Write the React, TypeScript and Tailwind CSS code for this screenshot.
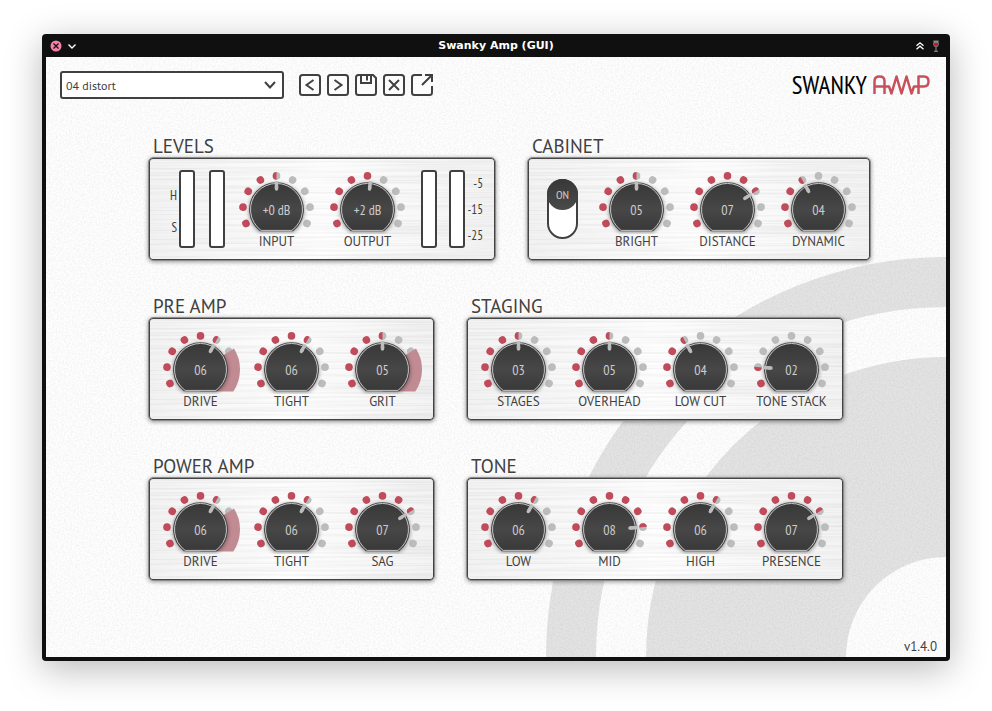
import { useId, useState, type ReactNode } from 'react';

const SANS = "font-['PT_Sans','Noto_Sans',sans-serif]";
const NARROW = "font-['PT_Sans_Narrow','Roboto_Condensed',sans-serif]";

const DOT_STEP = 0.5;
const DOT_RADIUS = 33.6;

function Grain() {
  return (
    <svg className="pointer-events-none absolute inset-0 size-full" aria-hidden="true">
      <filter id="grain" x="0" y="0" width="100%" height="100%">
        <feTurbulence type="fractalNoise" baseFrequency="0.6" numOctaves="3" seed="4" />
        <feColorMatrix values="0 0 0 0 0  0 0 0 0 0  0 0 0 0 0  0.1 0 0 0 -0.036" />
      </filter>
      <rect width="100%" height="100%" filter="url(#grain)" />
    </svg>
  );
}

function Rings() {
  return (
    <svg
      className="pointer-events-none absolute bottom-0 right-0 size-[400px]"
      viewBox="0 0 400 400"
      aria-hidden="true"
    >
      <circle cx="400" cy="400" r="375" fill="none" stroke="#e3e3e3" strokeWidth="50" />
      <circle cx="400" cy="400" r="200" fill="none" stroke="#e3e3e3" strokeWidth="200" />
    </svg>
  );
}

function Brushed() {
  return (
    <svg className="pointer-events-none absolute inset-px" width="100%" height="100%" aria-hidden="true">
      <filter id="brushed" x="0" y="0" width="100%" height="100%">
        <feTurbulence type="fractalNoise" baseFrequency="0.006 0.45" numOctaves="3" seed="11" />
        <feColorMatrix values="0 0 0 0 0  0 0 0 0 0  0 0 0 0 0  0.12 0 0 0 -0.045" />
      </filter>
      <rect width="100%" height="100%" filter="url(#brushed)" />
    </svg>
  );
}

type KnobProps = {
  label: string;
  display: string;
  /** Pointer position in dot steps, from -4 to 4. */
  position: number;
  warn?: boolean;
};

function Knob({ label, display, position, warn }: KnobProps) {
  const id = useId();
  const degrees = (position * DOT_STEP * 180) / Math.PI;
  return (
    <div className="flex w-[91px] flex-col items-center">
      <div className="relative h-[74px] w-full">
        <svg className="absolute inset-0 size-full" viewBox="-45.5 -49.5 91 74" aria-hidden="true">
          {[-4, -3, -2, -1, 0, 1, 2, 3, 4].map((i) => {
            const a = i * DOT_STEP;
            const cx = DOT_RADIUS * Math.sin(a);
            const cy = -DOT_RADIUS * Math.cos(a);
            return (
              <g key={i} transform={`translate(${cx} ${cy}) rotate(${(a * 180) / Math.PI})`}>
                <circle r="3.8" fill={i < position ? '#c04b5b' : '#bcbcbc'} />
                {i === position && <path d="M0 -3.8A3.8 3.8 0 0 0 0 3.8Z" fill="#c04b5b" />}
              </g>
            );
          })}
          {warn && <path d="M0 0L33.5 -20.9A39.5 39.5 0 0 1 32.8 22H0Z" fill="#c18b93" />}
          <path
            className="drop-shadow-[0_1px_2px_rgba(0,0,0,0.45)]"
            d="M-16.7 21.8A27.4 27.4 0 1 1 16.7 21.8Z"
            fill="#444444"
          />
          <path
            d="M-15.4 20.9A26 26 0 1 1 15.4 20.9Z"
            fill="url(#knob-face)"
            stroke="#c4c4c4"
            strokeWidth="1"
          />
          <g transform={`rotate(${degrees})`}>
            <path d="M0 -28.5V-21" stroke="#bdbdbd" strokeWidth="3.4" />
            <path d="M0 -23V-20.5" stroke="#bdbdbd" strokeWidth="3.4" strokeLinecap="round" />
          </g>
        </svg>
        <span
          className={`absolute inset-x-0 top-[41px] text-center text-[14px] leading-[18px] text-[#cccccc] ${NARROW}`}
        >
          {display}
        </span>
        <input
          id={id}
          type="range"
          min={-4}
          max={4}
          step={0.1}
          defaultValue={position}
          className="absolute inset-0 size-full cursor-pointer opacity-0"
        />
      </div>
      <label htmlFor={id} className="whitespace-nowrap text-[13px] leading-4">
        {label}
      </label>
    </div>
  );
}

function Meter({ label }: { label: string }) {
  return (
    <div
      role="meter"
      aria-label={label}
      aria-valuenow={0}
      className="h-[78px] w-4 rounded-[3px] border-2 border-[#404040] bg-white"
    />
  );
}

function Toggle() {
  const [on, setOn] = useState(true);
  return (
    <label className="relative flex h-[60px] w-[31px] cursor-pointer flex-col rounded-full border-2 border-[#404040] bg-white">
      <input
        type="checkbox"
        role="switch"
        aria-label="Cabinet"
        checked={on}
        onChange={(e) => setOn(e.target.checked)}
        className="absolute inset-0 size-full opacity-0"
      />
      <span
        className={`-mx-0.5 -my-0.5 flex h-[31px] items-center justify-center rounded-full bg-linear-to-b from-[#383838] to-[#4a4a4a] text-[12px] leading-4 text-[#cccccc] ${NARROW} ${on ? '' : 'mt-auto'}`}
      >
        {on ? 'ON' : 'OFF'}
      </span>
    </label>
  );
}

function Section({ title, children }: { title: string; children: ReactNode }) {
  return (
    <section>
      <h2 className="pb-0.5 pl-[5px] text-[19px] leading-[18px]">{title}</h2>
      <div className="relative flex h-[104px] overflow-clip rounded-[5px] border border-[#8c8c8c] bg-linear-to-r from-[#f3f3f3] via-[#fefefe] to-[#f3f3f3] px-1.5 pt-0.5 shadow-[inset_0_0_0_1px_#444444,0_1px_4px_rgba(0,0,0,0.4)]">
        <Brushed />
        <div className="relative flex">{children}</div>
      </div>
    </section>
  );
}

function ToolButton({ label, children }: { label: string; children: ReactNode }) {
  return (
    <button type="button" aria-label={label} className="size-[22px]">
      <svg viewBox="0 0 22 22" className="size-full" fill="none" stroke="#404040" strokeWidth="2">
        {children}
      </svg>
    </button>
  );
}

function Frame() {
  return <rect x="1" y="1" width="20" height="20" rx="2.5" fill="#fcfcfc" />;
}

export default function App() {
  return (
    <div className="flow-root min-h-screen bg-white">
      <svg width="0" height="0" className="absolute" aria-hidden="true">
        <linearGradient id="knob-face" x1="0" y1="0" x2="0" y2="1">
          <stop offset="0" stopColor="#383838" />
          <stop offset="0.55" stopColor="#474747" />
          <stop offset="1" stopColor="#393939" />
        </linearGradient>
      </svg>
      <div className="mx-[42px] mt-[34px] rounded-[4px] bg-[#101010] px-1 pb-1 shadow-[0_8px_36px_rgba(0,0,0,0.28)]">
        <header className="grid h-[23px] grid-cols-[1fr_auto_1fr] items-center px-1">
          <div className="flex items-center gap-1">
            <button type="button" aria-label="Close" className="size-3">
              <svg viewBox="0 0 12 12" className="size-full">
                <circle cx="6" cy="6" r="5.5" fill="#f77fa8" />
                <path d="M3.5 3.5L8.5 8.5M8.5 3.5L3.5 8.5" stroke="#101010" strokeWidth="1.3" />
              </svg>
            </button>
            <button type="button" aria-label="Window menu" className="size-3">
              <svg viewBox="0 0 12 12" className="size-full">
                <path d="M2.5 4.5L6 8L9.5 4.5" fill="none" stroke="#ffffff" strokeWidth="1.4" />
              </svg>
            </button>
          </div>
          <h1 className="font-['DejaVu_Sans',sans-serif] text-[11px] font-bold leading-4 text-white">
            Swanky Amp (GUI)
          </h1>
          <div className="flex items-center justify-end gap-1">
            <button type="button" aria-label="Keep above" className="size-3">
              <svg viewBox="0 0 12 12" className="size-full">
                <path
                  d="M2.5 5.8L6 2.8L9.5 5.8M2.5 9.2L6 6.2L9.5 9.2"
                  fill="none"
                  stroke="#ffffff"
                  strokeWidth="1.3"
                />
              </svg>
            </button>
            <svg viewBox="0 0 12 12" className="size-3" aria-hidden="true">
              <path d="M3.5 0.5H8.5L8.8 4.5Q8.6 7 6 7Q3.4 7 3.2 4.5Z" fill="#8d8282" />
              <path d="M4 3H8L8.1 4.6Q7.8 6.2 6 6.2Q4.2 6.2 3.9 4.6Z" fill="#b3202a" />
              <path d="M6 7V11M4 11.3H8" stroke="#9a9090" strokeWidth="1" />
            </svg>
          </div>
        </header>

        <main className={`relative bg-[#fefefe] text-[#404040] ${SANS}`}>
          <Rings />
          <Grain />
          <div className="relative px-3.5 pt-3.5">
            <div className="flex h-7 items-center">
              <div className="relative w-[224px]">
                <select
                  aria-label="Preset"
                  defaultValue="04 distort"
                  className="block h-7 w-full appearance-none rounded-[3px] border-2 border-[#404040] bg-white pl-1 pt-px text-[12px] leading-4"
                >
                  <option>04 distort</option>
                </select>
                <svg
                  viewBox="0 0 12 8"
                  className="pointer-events-none absolute right-2 top-2.5 h-2 w-3"
                  aria-hidden="true"
                >
                  <path d="M1 1L6 6.5L11 1" fill="none" stroke="#404040" strokeWidth="2" />
                </svg>
              </div>
              <div className="ml-[15px] flex gap-1.5">
                <ToolButton label="Previous preset">
                  <Frame />
                  <path d="M14.5 6L7.5 11L14.5 16" />
                </ToolButton>
                <ToolButton label="Next preset">
                  <Frame />
                  <path d="M7.5 6L14.5 11L7.5 16" />
                </ToolButton>
                <ToolButton label="Save preset">
                  <path
                    d="M3.5 1H18L21 4V18.5Q21 21 18.5 21H3.5Q1 21 1 18.5V3.5Q1 1 3.5 1Z"
                    fill="#fcfcfc"
                  />
                  <path d="M6 1V9H16V1M12 1.5V6.5" />
                </ToolButton>
                <ToolButton label="Delete preset">
                  <Frame />
                  <path d="M6 6L16 16M16 6L6 16" />
                </ToolButton>
                <ToolButton label="Open preset folder">
                  <path
                    d="M11 1H3.5Q1 1 1 3.5V18.5Q1 21 3.5 21H18.5Q21 21 21 18.5V11"
                    fill="#fcfcfc"
                    stroke="none"
                  />
                  <path d="M11 1H3.5Q1 1 1 3.5V18.5Q1 21 3.5 21H18.5Q21 21 21 18.5V12" />
                  <path d="M11 11L20.5 1.5M14 1H21V8" />
                </ToolButton>
              </div>
              <div className="ml-auto flex items-center gap-1.5 pr-0.5">
                <span className={`text-[25px] leading-7 text-black ${NARROW}`}>SWANKY</span>
                <svg viewBox="0 0 57 20" className="h-5 w-[57px]" role="img" aria-label="Amp">
                  <path
                    d="M1.5 19V6Q1.5 1.5 6.5 1.5Q11.5 1.5 11.5 6V19M1.5 11.5H16L18.5 18.5L23.5 1.5L28.5 18.5L33.5 1.5L38.5 18.5L41 11.5H51Q55.5 11.5 55.5 6.5Q55.5 1.5 51 1.5H45.5V19"
                    fill="none"
                    stroke="#c8505a"
                    strokeWidth="2.5"
                    strokeLinejoin="round"
                  />
                </svg>
              </div>
            </div>

            <div className="flex flex-col gap-9 pl-[88px] pt-[38px]">
              <div className="flex gap-[31px]">
                <Section title="LEVELS">
                  <div className="flex w-[76px] items-start pt-2.5">
                    <div
                      className={`flex w-[22px] flex-col gap-4 pt-[18px] text-right text-[13px] leading-4 ${NARROW}`}
                    >
                      <span>H</span>
                      <span>S</span>
                    </div>
                    <div className="ml-0.5 flex gap-3.5">
                      <Meter label="Input left" />
                      <Meter label="Input right" />
                    </div>
                  </div>
                  <Knob label="INPUT" display="+0 dB" position={0} />
                  <Knob label="OUTPUT" display="+2 dB" position={0.2} />
                  <div className="flex w-[76px] items-start pl-2 pt-2.5">
                    <div className="flex gap-3">
                      <Meter label="Output left" />
                      <Meter label="Output right" />
                    </div>
                    <div
                      className={`flex w-[18px] flex-col gap-2.5 pt-1.5 text-right text-[13px] leading-4 ${NARROW}`}
                    >
                      <span>-5</span>
                      <span>-15</span>
                      <span>-25</span>
                    </div>
                  </div>
                </Section>
                <Section title="CABINET">
                  <div className="flex w-[57px] justify-center pt-[19px]">
                    <Toggle />
                  </div>
                  <Knob label="BRIGHT" display="05" position={0} />
                  <Knob label="DISTANCE" display="07" position={2} />
                  <Knob label="DYNAMIC" display="04" position={-1} />
                </Section>
              </div>

              <div className="flex gap-[31px]">
                <Section title="PRE AMP">
                  <Knob label="DRIVE" display="06" position={1} warn />
                  <Knob label="TIGHT" display="06" position={1} />
                  <Knob label="GRIT" display="05" position={0} warn />
                </Section>
                <Section title="STAGING">
                  <Knob label="STAGES" display="03" position={0} />
                  <Knob label="OVERHEAD" display="05" position={0} />
                  <Knob label="LOW CUT" display="04" position={-1} />
                  <Knob label="TONE STACK" display="02" position={-3} />
                </Section>
              </div>

              <div className="flex gap-[31px]">
                <Section title="POWER AMP">
                  <Knob label="DRIVE" display="06" position={1} warn />
                  <Knob label="TIGHT" display="06" position={1} />
                  <Knob label="SAG" display="07" position={2} />
                </Section>
                <Section title="TONE">
                  <Knob label="LOW" display="06" position={1} />
                  <Knob label="MID" display="08" position={3} />
                  <Knob label="HIGH" display="06" position={1} />
                  <Knob label="PRESENCE" display="07" position={2} />
                </Section>
              </div>
            </div>
          </div>
          <footer className="relative px-[9px] pb-0.5 pt-[58px] text-right text-[13px] leading-4">v1.4.0</footer>
        </main>
      </div>
    </div>
  );
}
